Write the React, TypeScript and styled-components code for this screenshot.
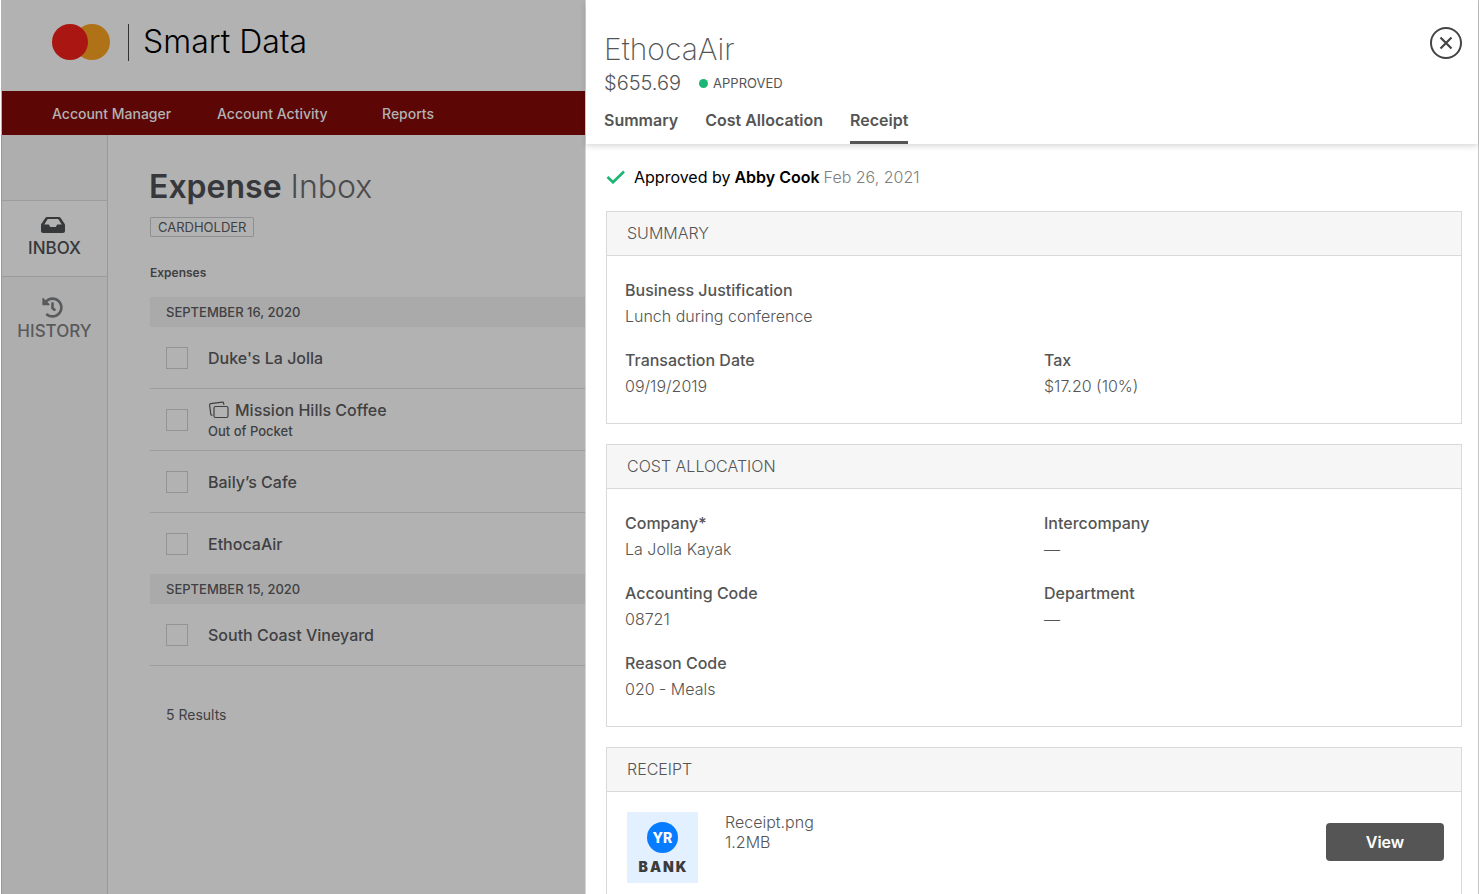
import React from "react";
import styled, { createGlobalStyle } from "styled-components";

const GlobalStyle = createGlobalStyle`
  *, *::before, *::after { box-sizing: border-box; }
  body { margin: 0; background: #fff; font-family: Inter, "Liberation Sans", sans-serif; color: #555; }
  button { font: inherit; color: inherit; background: none; border: 0; padding: 0; cursor: pointer; }
  a { color: inherit; text-decoration: none; }
  h1, h2, p, ul, dl, dd { margin: 0; padding: 0; font-weight: inherit; }
  ul { list-style: none; }
`;

const Shell = styled.div`
  display: grid;
  grid-template-columns: minmax(0, 585fr) minmax(0, 894fr);
  min-height: 100vh;
`;

const Page = styled.div`
  display: flex;
  flex-direction: column;
  min-width: 0;
  border-left: 1px solid #fff;
  background: #b2b2b2;
  color: #3f4042;
  overflow: hidden;
  white-space: nowrap;
`;

const Brand = styled.header`
  display: flex;
  align-items: center;
  height: 91px;
  padding: 0 0 7px 50px;
`;

const Divider = styled.span`
  width: 1px;
  height: 37px;
  margin: 0 14px 0 17px;
  background: #333;
`;

const BrandName = styled.span`
  font-size: 32px;
  font-weight: 300;
  line-height: 36px;
  color: #000;
`;

const Nav = styled.nav`
  display: flex;
  align-items: center;
  gap: 43px;
  height: 44px;
  margin-left: 1px;
  padding-left: 50px;
  background: #5c0606;
  color: #b2b2b2;
  font-size: 14px;
  font-weight: 500;
  a { min-width: 122px; }
`;

const Body = styled.div`
  display: flex;
  flex: 1;
`;

const Sidebar = styled.aside`
  flex: 0 0 107px;
  padding-top: 65px;
  border-left: 1px solid #999;
  border-right: 1px solid #999;
  margin-right: 41px;
  background: #aeaeae;
`;

const SideItem = styled.a<{ $active?: boolean }>`
  display: flex;
  flex-direction: column;
  align-items: center;
  gap: 3px;
  height: 77px;
  margin-bottom: 5px;
  padding-top: 14px;
  border: solid ${(p) => (p.$active ? "#9b9ca0" : "transparent")};
  border-width: 1px 0;
  background: ${(p) => (p.$active ? "#b2b2b2" : "transparent")};
  color: ${(p) => (p.$active ? "#37383a" : "#595a5c")};
  font-size: 17px;
  font-weight: 500;
  line-height: 20px;
  svg { margin-right: 4px; }
`;

const Main = styled.main`
  flex: 1;
  min-width: 0;
  padding-top: 32px;
`;

const Title = styled.h1`
  font-size: 32px;
  font-weight: 300;
  line-height: 40px;
  color: #4a4b4d;
  strong { font-weight: 600; color: #37383b; }
`;

const Role = styled.span`
  display: inline-block;
  margin: 10px 0 0 1px;
  padding: 0 7px;
  border: 1px solid #8f9092;
  border-radius: 1px;
  font-size: 13px;
  line-height: 18px;
`;

const ListTitle = styled.h2`
  margin: 26px 0 14px 1px;
  font-size: 12px;
  font-weight: 600;
  line-height: 20px;
`;

const DateBar = styled.h2`
  margin-left: 1px;
  padding-left: 16px;
  background: #aaa;
  font-size: 13px;
  font-weight: 500;
  line-height: 30px;
`;

const Row = styled.li<{ $flush?: boolean }>`
  display: flex;
  align-items: center;
  gap: 20px;
  height: ${(p) => (p.$flush ? "61px" : "62px")};
  margin-left: 1px;
  padding-left: 16px;
  border-bottom: ${(p) => (p.$flush ? "0" : "1px solid #9b9ca0")};
  font-size: 16px;
  font-weight: 500;
  line-height: 21px;
`;

const Check = styled.input`
  appearance: none;
  width: 22px;
  height: 22px;
  margin: 0;
  border: 1px solid #939393;
`;

const RowLabel = styled.label`
  display: flex;
  flex-direction: column;
  padding-top: 2px;
`;

const Linked = styled.span`
  display: flex;
  align-items: center;
  gap: 6px;
`;

const RowNote = styled.span`
  font-size: 13px;
`;

const Results = styled.p`
  margin: 39px 0 0 17px;
  font-size: 14px;
  line-height: 20px;
`;

const Drawer = styled.section`
  display: flex;
  flex-direction: column;
  min-width: 0;
  border-right: 1px solid #c4c4c4;
  border-left: 1px solid #d6d6d6;
  background: #fff;
`;

const DrawerHead = styled.header`
  display: flex;
  justify-content: space-between;
  align-items: flex-start;
  height: 144px;
  padding: 27px 16px 0 18px;
  box-shadow: 0 2px 6px rgba(0, 0, 0, 0.16);
`;

const Merchant = styled.h1`
  padding-top: 3px;
  font-size: 30px;
  font-weight: 200;
  line-height: 38px;
`;

const AmountLine = styled.div`
  display: flex;
  align-items: center;
  gap: 18px;
  font-size: 20px;
  font-weight: 300;
  line-height: 30px;
`;

const Status = styled.span`
  display: flex;
  align-items: center;
  gap: 5px;
  font-size: 13px;
  font-weight: 400;
  &::before {
    content: "";
    width: 9px;
    height: 9px;
    border-radius: 50%;
    background: #1bb574;
  }
`;

const Tabs = styled.div`
  display: flex;
  gap: 27px;
`;

const Tab = styled.button`
  height: 46px;
  border-bottom: 3px solid transparent;
  font-size: 16px;
  font-weight: 600;
  line-height: 20px;
  &[aria-selected="true"] { border-color: #555; }
`;

const Close = styled.button`
  display: flex;
  color: #444;
`;

const DrawerBody = styled.div`
  display: flex;
  flex: 1;
  flex-direction: column;
  gap: 20px;
  padding: 22px 16px 0 20px;
`;

const Approval = styled.p`
  display: flex;
  align-items: center;
  gap: 4px;
  margin-bottom: 3px;
  font-size: 16px;
  font-weight: 400;
  line-height: 22px;
  color: #000;
  svg { margin-right: 4px; }
  strong { font-weight: 600; }
  time { color: #808080; font-weight: 300; }
`;

const Card = styled.section<{ $open?: boolean }>`
  border: 1px solid #d9d9d9;
  ${(p) => p.$open && "flex: 1; border-bottom: 0;"}
`;

const CardTitle = styled.h2`
  padding-left: 20px;
  border-bottom: 1px solid #d9d9d9;
  background: #f6f6f6;
  font-size: 16px;
  font-weight: 300;
  line-height: 43px;
`;

const Fields = styled.dl`
  display: grid;
  grid-template-columns: 419fr 417fr;
  row-gap: 18px;
  padding: 21px 0 24px 18px;
`;

const Field = styled.div<{ $wide?: boolean }>`
  grid-column: ${(p) => (p.$wide ? "1 / -1" : "auto")};
  font-size: 16px;
  line-height: 26px;
  dt { font-weight: 500; }
  dd { font-weight: 300; }
`;

const FileRow = styled.div`
  display: flex;
  align-items: flex-start;
  padding: 20px 17px 11px 20px;
`;

const Thumb = styled.div`
  display: flex;
  flex-direction: column;
  align-items: center;
  gap: 4px;
  width: 71px;
  height: 71px;
  padding-top: 10px;
  background: #e2f0ff;
`;

const ThumbMark = styled.span`
  width: 31px;
  height: 31px;
  border-radius: 50%;
  background: #087cff;
  color: #fff;
  font-size: 14px;
  font-weight: 800;
  line-height: 31px;
  text-align: center;
`;

const ThumbName = styled.span`
  font-size: 14px;
  font-weight: 900;
  line-height: 20px;
  letter-spacing: 2px;
  padding-left: 2px;
  color: #3c3c3c;
`;

const FileInfo = styled.p`
  display: flex;
  flex: 1;
  flex-direction: column;
  margin-left: 27px;
  font-size: 16px;
  font-weight: 300;
  line-height: 20px;
`;

const ViewButton = styled.button`
  width: 118px;
  height: 38px;
  margin-top: 11px;
  border-radius: 4px;
  background: #555;
  color: #fff;
  font-size: 16px;
  font-weight: 600;
`;

const Logo = () => (
  <svg width="60" height="38" viewBox="0 0 60 38" aria-hidden="true">
    <circle cx="41" cy="19" r="18" fill="#b07216" />
    <circle cx="19" cy="19" r="18" fill="#aa1712" />
  </svg>
);

const InboxIcon = () => (
  <svg width="24" height="20" viewBox="0 0 24 20" aria-hidden="true">
    <path
      fill="currentColor"
      fillRule="evenodd"
      d="M6 2h12c.7 0 1.300.3 1.700.9l4 6c.2.300.3.700.3 1.100v6c0 1.100-.9 2-2 2H2c-1.100 0-2-.9-2-2v-6c0-.4.1-.8.3-1.100l4-6C4.700 2.300 5.300 2 6 2zm.7 2L3.300 9.400h4.500l1.400 2.600h5.600l1.400-2.600h4.500L17.300 4z"
    />
  </svg>
);

const HistoryIcon = () => (
  <svg width="21" height="21" viewBox="0 0 512 512" aria-hidden="true">
    <path
      fill="currentColor"
      d="M504 255.531c.253 136.640-111.180 248.372-247.820 248.468-59.015.042-113.223-20.530-155.822-54.911-11.077-8.940-11.905-25.541-1.839-35.607l11.267-11.267c8.609-8.609 22.353-9.551 31.891-1.984C173.062 425.135 212.781 440 256 440c101.705 0 184-82.311 184-184 0-101.705-82.311-184-184-184-48.814 0-93.149 18.969-126.068 49.932l50.754 50.754c10.080 10.080 2.941 27.314-11.313 27.314H24c-8.837 0-16-7.163-16-16V38.627c0-14.254 17.234-21.393 27.314-11.314l49.372 49.372C129.209 34.136 189.552 8 256 8c136.810 0 247.747 110.780 248 247.531zm-180.912 78.784l9.823-12.630c8.138-10.463 6.253-25.542-4.210-33.679L288 256.349V152c0-13.255-10.745-24-24-24h-16c-13.255 0-24 10.745-24 24v135.651l65.409 50.874c10.463 8.137 25.541 6.253 33.679-4.210z"
    />
  </svg>
);

const StackIcon = () => (
  <svg width="21" height="18" viewBox="0 0 21 18" fill="none" stroke="currentColor" strokeWidth="1.200" aria-hidden="true">
    <rect x="6" y="5.500" width="14" height="11" rx="1.500" />
    <path d="M4.500 14.200h-.6c-.6 0-1-.3-1.100-.9L1.600 4.100c-.1-.8.300-1.300 1-1.400L14.300 1.200c.8-.1 1.200.3 1.300.9l.3 1.700" />
  </svg>
);

const CheckIcon = () => (
  <svg width="20" height="14" viewBox="0 0 20 14" fill="none" aria-hidden="true">
    <path d="M1.500 7l5.500 5.300L18 1.500" stroke="#1bb574" strokeWidth="2.600" />
  </svg>
);

const CloseIcon = () => (
  <svg width="32" height="32" viewBox="0 0 32 32" fill="none" stroke="currentColor" aria-hidden="true">
    <circle cx="16" cy="16" r="15" strokeWidth="2" />
    <path d="M10.500 10.500l11 11M21.500 10.500l-11 11" strokeWidth="2.200" />
  </svg>
);

type Expense = { id: string; name: string; note?: string };

const groups: { date: string; items: Expense[] }[] = [
  {
    date: "SEPTEMBER 16, 2020",
    items: [
      { id: "duke", name: "Duke's La Jolla" },
      { id: "mission", name: "Mission Hills Coffee", note: "Out of Pocket" },
      { id: "baily", name: "Baily’s Cafe" },
      { id: "ethoca", name: "EthocaAir" },
    ],
  },
  { date: "SEPTEMBER 15, 2020", items: [{ id: "south", name: "South Coast Vineyard" }] },
];

const FieldItem = ({ label, value, wide }: { label: string; value: string; wide?: boolean }) => (
  <Field $wide={wide}>
    <dt>{label}</dt>
    <dd>{value}</dd>
  </Field>
);

export default function App() {
  return (
    <>
      <GlobalStyle />
      <Shell>
        <Page>
          <Brand>
            <Logo />
            <Divider />
            <BrandName>Smart Data</BrandName>
          </Brand>
          <Nav>
            <a href="#manager">Account Manager</a>
            <a href="#activity">Account Activity</a>
            <a href="#reports">Reports</a>
          </Nav>
          <Body>
            <Sidebar>
              <SideItem href="#inbox" $active>
                <InboxIcon />
                INBOX
              </SideItem>
              <SideItem href="#history">
                <HistoryIcon />
                HISTORY
              </SideItem>
            </Sidebar>
            <Main>
              <Title>
                <strong>Expense</strong> Inbox
              </Title>
              <Role>CARDHOLDER</Role>
              <ListTitle>Expenses</ListTitle>
              {groups.map((group, g) => (
                <section key={group.date}>
                  <DateBar>{group.date}</DateBar>
                  <ul>
                    {group.items.map((item, i) => (
                      <Row key={item.id} $flush={g < groups.length - 1 && i === group.items.length - 1}>
                        <Check type="checkbox" id={item.id} />
                        <RowLabel htmlFor={item.id}>
                          <Linked>
                            {item.note && <StackIcon />}
                            {item.name}
                          </Linked>
                          {item.note && <RowNote>{item.note}</RowNote>}
                        </RowLabel>
                      </Row>
                    ))}
                  </ul>
                </section>
              ))}
              <Results>5 Results</Results>
            </Main>
          </Body>
        </Page>
        <Drawer aria-label="EthocaAir">
          <DrawerHead>
            <div>
              <Merchant>EthocaAir</Merchant>
              <AmountLine>
                $655.69
                <Status>APPROVED</Status>
              </AmountLine>
              <Tabs role="tablist">
                <Tab role="tab" aria-selected="false">Summary</Tab>
                <Tab role="tab" aria-selected="false">Cost Allocation</Tab>
                <Tab role="tab" aria-selected="true">Receipt</Tab>
              </Tabs>
            </div>
            <Close aria-label="Close">
              <CloseIcon />
            </Close>
          </DrawerHead>
          <DrawerBody>
            <Approval>
              <CheckIcon />
              Approved by <strong>Abby Cook</strong> <time dateTime="2021-02-26">Feb 26, 2021</time>
            </Approval>
            <Card>
              <CardTitle>SUMMARY</CardTitle>
              <Fields>
                <FieldItem label="Business Justification" value="Lunch during conference" wide />
                <FieldItem label="Transaction Date" value="09/19/2019" />
                <FieldItem label="Tax" value="$17.20 (10%)" />
              </Fields>
            </Card>
            <Card>
              <CardTitle>COST ALLOCATION</CardTitle>
              <Fields>
                <FieldItem label="Company*" value="La Jolla Kayak" />
                <FieldItem label="Intercompany" value="—" />
                <FieldItem label="Accounting Code" value="08721" />
                <FieldItem label="Department" value="—" />
                <FieldItem label="Reason Code" value="020 - Meals" />
              </Fields>
            </Card>
            <Card $open>
              <CardTitle>RECEIPT</CardTitle>
              <FileRow>
                <Thumb>
                  <ThumbMark>YR</ThumbMark>
                  <ThumbName>BANK</ThumbName>
                </Thumb>
                <FileInfo>
                  <span>Receipt.png</span>
                  <span>1.2MB</span>
                </FileInfo>
                <ViewButton>View</ViewButton>
              </FileRow>
            </Card>
          </DrawerBody>
        </Drawer>
      </Shell>
    </>
  );
}
